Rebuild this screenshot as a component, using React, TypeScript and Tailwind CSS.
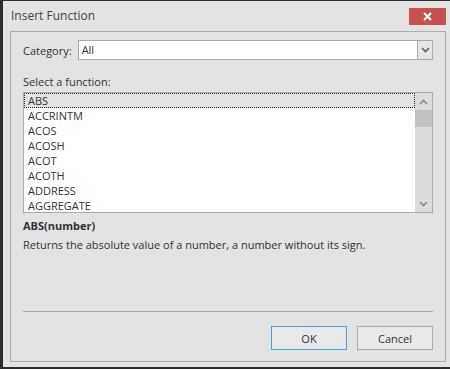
import React from "react";

const FUNCTIONS = ["ABS", "ACCRINTM", "ACOS", "ACOSH", "ACOT", "ACOTH", "ADDRESS", "AGGREGATE"];

function Chevron({ up = false, color = "#707070" }: { up?: boolean; color?: string }) {
  return (
    <svg width="9" height="6" viewBox="0 0 9 6" fill="none">
      <polyline
        points={up ? "1,5 4.5,1.5 8,5" : "1,1 4.5,4.5 8,1"}
        stroke={color}
        strokeWidth="1.6"
      />
    </svg>
  );
}

function Button({ label, primary = false }: { label: string; primary?: boolean }) {
  return (
    <button
      className={`flex h-[24px] w-[76px] items-center justify-center border bg-[#e9e9e9] text-[11px] text-[#333] ${
        primary ? "border-[#4a9ff0]" : "border-[#adadad]"
      }`}
    >
      {label}
    </button>
  );
}

export default function App() {
  return (
    <div
      className="flex h-[369px] w-[450px] flex-col border-t border-b-2 border-l-[3px] border-[#2d2d2d] bg-[#e3e3e3] text-[#333]"
      style={{ fontFamily: '"Open Sans", "Noto Sans", sans-serif' }}
    >
      {/* title bar */}
      <div className="flex h-[30px] items-center justify-between pl-[8px] pr-[4px]">
        <span className="text-[12px] leading-none text-[#444]">Insert Function</span>
        <div className="flex h-[17px] w-[37px] items-center justify-center bg-[#c75050]">
          <svg width="9" height="9" viewBox="0 0 9 9">
            <path d="M1 1 L8 8 M8 1 L1 8" stroke="#fff" strokeWidth="2" />
          </svg>
        </div>
      </div>

      {/* body */}
      <div className="mb-[5px] ml-[7px] mr-[4px] flex flex-1 flex-col border border-[#ababab] px-[12px] pb-[11px] pt-[8px] text-[11px] leading-[15px]">
        <div className="flex h-[20px] items-center gap-[6px]">
          <span>Category:</span>
          <div className="flex h-[20px] flex-1 border border-[#ababab] bg-white">
            <span className="flex-1 pl-[3px] leading-[18px]">All</span>
            <div className="flex w-[15px] items-center justify-center border-l border-[#ababab] bg-[#e6e6e6]">
              <Chevron color="#606060" />
            </div>
          </div>
        </div>

        <div className="mt-[14px]">Select a function:</div>

        <div className="mt-[3px] flex h-[121px] border border-[#ababab] bg-white">
          <div className="flex-1">
            {FUNCTIONS.map((name, i) => (
              <div
                key={name}
                className={
                  i === 0
                    ? "h-[15px] border border-dotted border-[#222] bg-[#e3e3e3] pl-[3px] leading-[13px]"
                    : "h-[15px] pl-[4px]"
                }
              >
                {name}
              </div>
            ))}
          </div>
          <div className="flex w-[17px] flex-col bg-[#dcdcdc]">
            <div className="flex h-[17px] items-center justify-center">
              <Chevron up color="#8a8a8a" />
            </div>
            <div className="h-[17px] bg-[#c2c2c2]" />
            <div className="flex-1" />
            <div className="flex h-[17px] items-center justify-center">
              <Chevron color="#8a8a8a" />
            </div>
          </div>
        </div>

        <div className="mt-[5px] font-bold">ABS(number)</div>
        <div className="mt-[4px]">Returns the absolute value of a number, a number without its sign.</div>

        <div className="mt-auto h-px bg-[#a9a9a9]" />
        <div className="mt-[14px] flex justify-end gap-[10px]">
          <Button label="OK" primary />
          <Button label="Cancel" />
        </div>
      </div>
    </div>
  );
}
